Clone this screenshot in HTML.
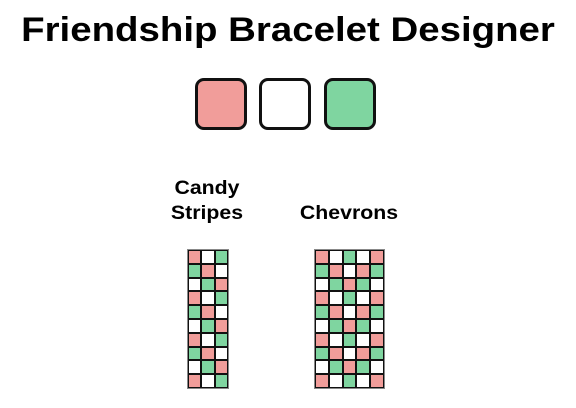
<!DOCTYPE html>
<html><head><style>
body{margin:0;width:576px;height:408px;background:#fff;font-family:"Liberation Sans",sans-serif;position:relative;overflow:hidden}
h1{position:absolute;top:11px;left:0;width:576px;text-align:center;margin:0;font-size:34px;font-weight:bold;color:#000;white-space:nowrap;transform:scaleX(1.13)}
.sw{position:absolute;top:78px;width:46px;height:46px;border:3px solid #111;border-radius:9px}
.lab{position:absolute;font-weight:bold;font-size:19px;text-align:center;line-height:25px;transform:scaleX(1.12)}
.grid{position:absolute;display:grid;gap:2px;background:#111;border:1px solid #888;padding:1px}
.grid div{height:11.8px}
.P{background:#f19d9a}.W{background:#fff}.G{background:#7fd5a0}
</style></head><body>
<h1>Friendship Bracelet Designer</h1>
<div class="sw" style="left:195px;background:#f19d9a"></div>
<div class="sw" style="left:259px;background:#fff"></div>
<div class="sw" style="left:324px;background:#7fd5a0"></div>
<div class="lab" style="left:157px;top:176px;width:100px">Candy<br>Stripes</div>
<div class="lab" style="left:299px;top:201px;width:100px">Chevrons</div>
<div class="grid" id="g1" style="left:187px;top:249px;width:38px;grid-template-columns:repeat(3,1fr)"></div>
<div class="grid" id="g2" style="left:314px;top:249px;width:67px;grid-template-columns:repeat(5,1fr)"></div>
<script>
var a=["PWG","GPW","WGP"],b=["PWGWP","GPWPG","WGPGW"];
function f(id,p){var h="";for(var r=0;r<10;r++){var s=p[r%3];for(var c=0;c<s.length;c++)h+='<div class="'+s[c]+'"></div>';}document.getElementById(id).innerHTML=h;}
f("g1",a);f("g2",b);
</script>
</body></html>
